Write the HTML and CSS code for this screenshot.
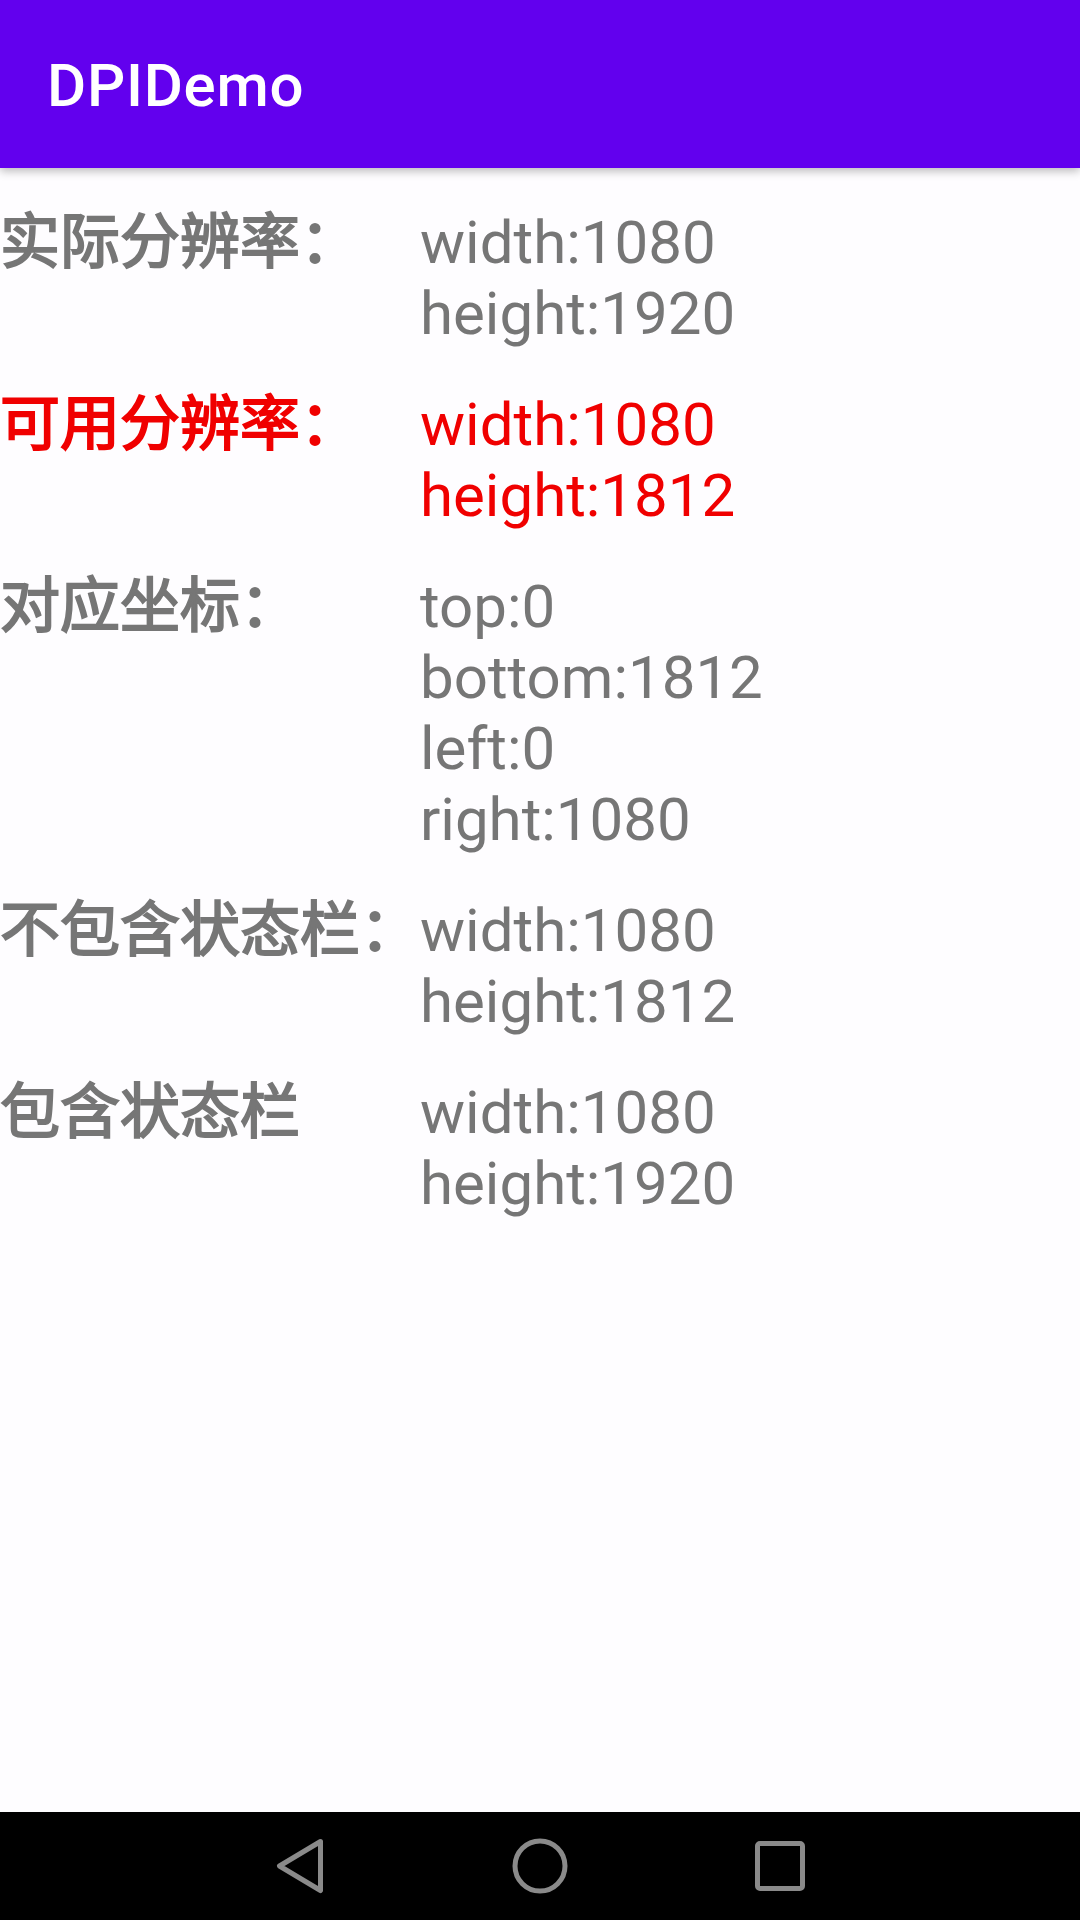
FILE: index.html
```html
<!DOCTYPE html>
<html lang="zh-CN">
<head>
<meta charset="utf-8">
<title>DPIDemo</title>
<link rel="stylesheet" href="styles.css">
</head>
<body>
<div class="screen">
  <header class="appbar">
    <div class="title">DPIDemo</div>
  </header>
  <main class="content">
    <div class="row">
      <div class="label">实际分辨率：</div>
      <div class="values"><span>width:1080</span><span>height:1920</span></div>
    </div>
    <div class="row red">
      <div class="label">可用分辨率：</div>
      <div class="values"><span>width:1080</span><span>height:1812</span></div>
    </div>
    <div class="row">
      <div class="label">对应坐标：</div>
      <div class="values"><span>top:0</span><span>bottom:1812</span><span>left:0</span><span>right:1080</span></div>
    </div>
    <div class="row">
      <div class="label">不包含状态栏：</div>
      <div class="values"><span>width:1080</span><span>height:1812</span></div>
    </div>
    <div class="row">
      <div class="label">包含状态栏</div>
      <div class="values"><span>width:1080</span><span>height:1920</span></div>
    </div>
  </main>
  <nav class="navbar">
    <div class="navslot">
      <svg class="navicon" width="60" height="60" viewBox="0 0 60 60"><polygon points="50.5,5.5 9.5,30 50.5,54.5" fill="none" stroke="#8a8a8a" stroke-width="5" stroke-linejoin="round"/></svg>
    </div>
    <div class="navslot">
      <svg class="navicon" width="60" height="60" viewBox="0 0 60 60"><circle cx="30" cy="30" r="25" fill="none" stroke="#8a8a8a" stroke-width="5"/></svg>
    </div>
    <div class="navslot">
      <svg class="navicon" width="60" height="60" viewBox="0 0 60 60"><rect x="7.5" y="7.5" width="45" height="45" rx="2.5" fill="none" stroke="#8a8a8a" stroke-width="5"/></svg>
    </div>
  </nav>
</div>
</body>
</html>
```

FILE: styles.css
```css
html, body {
  margin: 0;
  padding: 0;
}
body {
  width: 1080px;
  height: 1920px;
  overflow: hidden;
  background: #fefdff;
  font-family: Roboto, "Noto Sans CJK SC", sans-serif;
}
.screen {
  display: flex;
  flex-direction: column;
  width: 1080px;
  height: 1920px;
}
.appbar {
  position: relative;
  z-index: 1;
  flex: 0 0 168px;
  height: 168px;
  box-sizing: border-box;
  background: #6200ee;
  padding: 51px 0 0 47px;
  box-shadow: 0 3px 9px rgba(0, 0, 0, 0.28);
}
.title {
  color: #ffffff;
  font-family: Roboto, sans-serif;
  font-weight: 500;
  font-size: 60px;
  line-height: 70px;
  letter-spacing: 0.75px;
}
.content {
  flex: 1 1 auto;
  display: flex;
  flex-direction: column;
  gap: 40px;
  padding-top: 39px;
}
.row {
  display: grid;
  grid-template-columns: 420px 1fr;
  color: #767676;
  font-size: 60px;
  line-height: 71px;
}
.row.red {
  color: #f00000;
}
.label {
  font-weight: 400;
  -webkit-text-stroke: 1.9px currentColor;
  white-space: nowrap;
}
.values {
  display: flex;
  flex-direction: column;
  font-weight: 400;
}
.navbar {
  flex: 0 0 108px;
  height: 108px;
  background: #000000;
  display: flex;
  justify-content: center;
  align-items: center;
}
.navslot {
  width: 240px;
  display: flex;
  justify-content: center;
  align-items: center;
}
.navicon {
  display: block;
}
```
